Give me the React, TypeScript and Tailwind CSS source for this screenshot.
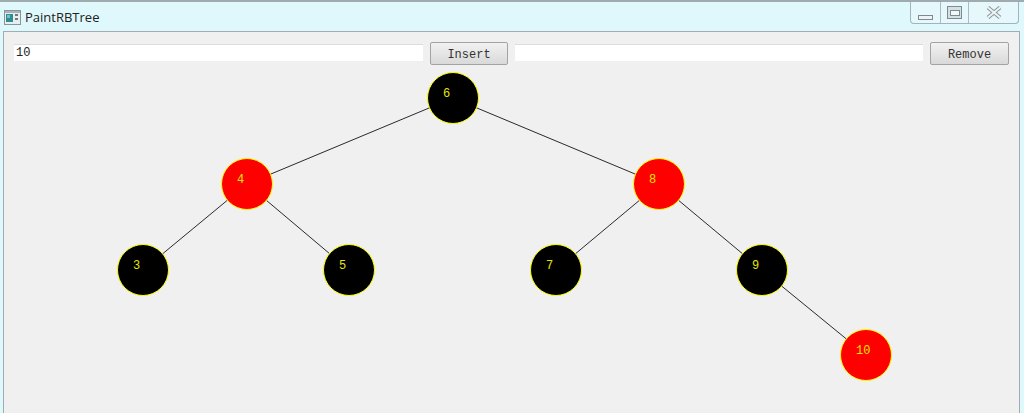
const mono = "font-['Liberation_Mono','DejaVu_Sans_Mono',monospace]";

type TreeNode = { label: string; x: number; y: number; red?: boolean };

// canvas coordinates, origin is the top left of the tree area
const nodes: TreeNode[] = [
  { label: "6", x: 449, y: 33 },
  { label: "4", x: 243, y: 119, red: true },
  { label: "8", x: 655, y: 119, red: true },
  { label: "3", x: 139, y: 205 },
  { label: "5", x: 345, y: 205 },
  { label: "7", x: 552, y: 205 },
  { label: "9", x: 758, y: 205 },
  { label: "10", x: 862, y: 290, red: true },
];

const edges: [number, number][] = [
  [0, 1],
  [0, 2],
  [1, 3],
  [1, 4],
  [2, 5],
  [2, 6],
  [6, 7],
];

function AppIcon() {
  return (
    <svg width="17" height="15" viewBox="0 0 17 15" className="shrink-0">
      <rect x="0.5" y="0.5" width="16" height="14" fill="#e8eef0" stroke="#8b9498" />
      <rect x="1" y="1" width="15" height="2" fill="#a9b4ba" />
      <rect x="2" y="4" width="7" height="8" fill="#2f8f8a" />
      <rect x="3" y="5" width="3" height="3" fill="#7fb8d8" />
      <rect x="11" y="4" width="3" height="2" fill="#6f7a80" />
      <rect x="11" y="8" width="3" height="2" fill="#6f7a80" />
    </svg>
  );
}

function CaptionButtons() {
  return (
    <div className="flex h-[22px] w-[109px] rounded-b-[4px] border border-t-0 border-[#9fb4bb] bg-[#e6f8fb]">
      <div className="flex w-[30px] items-end justify-center border-r border-[#a8bcc2] pb-[3px]">
        <div className="h-[5px] w-[15px] border border-[#7d8a90] bg-[#eef3f5]" />
      </div>
      <div className="flex w-[28px] items-center justify-center border-r border-[#a8bcc2]">
        <div className="flex h-[13px] w-[15px] items-center justify-center border border-[#7d8a90] bg-[#d5e0e4]">
          <div className="h-[6px] w-[10px] border border-[#7d8a90] bg-[#f4f7f8]" />
        </div>
      </div>
      <div className="flex flex-1 items-center justify-center">
        <svg width="16" height="13" viewBox="0 0 16 13">
          <path d="M2 1.5 L14 11.5 M14 1.5 L2 11.5" stroke="#8a979c" strokeWidth="4" fill="none" />
          <path d="M2 1.5 L14 11.5 M14 1.5 L2 11.5" stroke="#eef3f5" strokeWidth="2" fill="none" />
        </svg>
      </div>
    </div>
  );
}

function ActionButton({ label, width }: { label: string; width: string }) {
  return (
    <button
      className={`h-[23px] shrink-0 rounded-[2px] border border-[#a3a3a3] bg-gradient-to-b from-[#f2f2f2] to-[#d9d9d9] pt-[2px] text-[12px] leading-none text-[#333] ${mono} ${width}`}
    >
      {label}
    </button>
  );
}

function Tree() {
  return (
    <div className="relative h-[341px] w-full">
      <svg width="1015" height="341" className="absolute left-0 top-0">
        {edges.map(([a, b]) => (
          <line
            key={`${a}-${b}`}
            x1={nodes[a].x}
            y1={nodes[a].y}
            x2={nodes[b].x}
            y2={nodes[b].y}
            stroke="#2a2a2a"
            strokeWidth="1"
          />
        ))}
        {nodes.map((n) => (
          <circle
            key={n.label}
            cx={n.x}
            cy={n.y}
            r="25.5"
            fill={n.red ? "#ff0000" : "#000000"}
            stroke="#ffff00"
            strokeWidth="1"
          />
        ))}
      </svg>
      {nodes.map((n) => (
        <span
          key={n.label}
          className={`absolute text-[12px] leading-none text-[#e6e600] ${mono}`}
          style={{ left: n.x - 10, top: n.y - 10 }}
        >
          {n.label}
        </span>
      ))}
    </div>
  );
}

export default function App() {
  return (
    <div className="flex h-[413px] w-[1024px] flex-col overflow-hidden border-t-2 border-[#a0abaf] bg-[#dff8fc]">
      <div className="flex h-[29px] shrink-0 items-start justify-between pr-[5px]">
        <div className="flex items-center gap-[4px] pl-[4px] pt-[8px]">
          <AppIcon />
          <span className="font-['Open_Sans',sans-serif] text-[13px] leading-[15px] text-[#222]">PaintRBTree</span>
        </div>
        <CaptionButtons />
      </div>
      <div className="ml-[3px] mr-[4px] flex-1 border-x border-t border-[#a3adb1] bg-[#f0f0f0]">
        <div className="flex h-[33px] items-start gap-[7px] pl-[10px] pr-[9px] pt-[10px]">
          <input
            readOnly
            value="10"
            className={`mt-[2px] h-[17px] w-[409px] shrink-0 border-t border-[#dcdcdc] bg-white px-[2px] text-[12px] text-[#222] outline-none ${mono}`}
          />
          <ActionButton label="Insert" width="w-[78px]" />
          <input readOnly className="mt-[2px] h-[17px] w-[408px] shrink-0 border-t border-[#dcdcdc] bg-white outline-none" />
          <ActionButton label="Remove" width="w-[79px]" />
        </div>
        <Tree />
      </div>
    </div>
  );
}
